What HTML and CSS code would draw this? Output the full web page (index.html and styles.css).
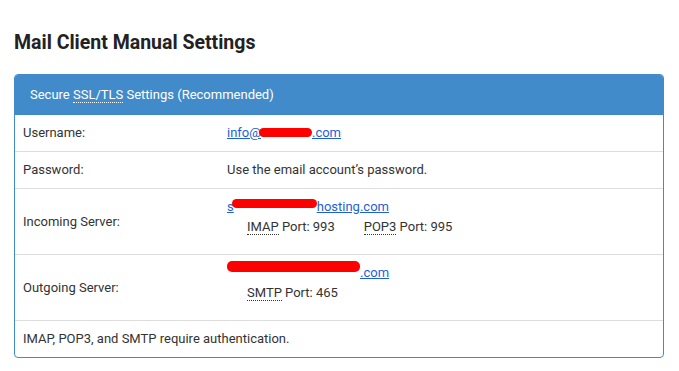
FILE: index.html
```html
<!DOCTYPE html>
<html>
<head>
<meta charset="utf-8">
<link rel="stylesheet" href="styles.css">
</head>
<body>
<div class="page">
  <h2 class="title">Mail Client Manual Settings</h2>
  <div class="panel">
    <div class="panel-heading">Secure <abbr>SSL/TLS</abbr> Settings (Recommended)</div>
    <table class="settings">
      <tr>
        <td class="label">Username:</td>
        <td><a href="#">info@<span class="redact r-user"></span>.com</a></td>
      </tr>
      <tr>
        <td class="label">Password:</td>
        <td>Use the email account’s password.</td>
      </tr>
      <tr>
        <td class="label">Incoming Server:</td>
        <td>
          <a href="#">s<span class="redact r-in"></span>hosting.com</a>
          <div class="ports"><span class="port"><abbr>IMAP</abbr> Port: 993</span><span class="port port2"><abbr>POP3</abbr> Port: 995</span></div>
        </td>
      </tr>
      <tr>
        <td class="label">Outgoing Server:</td>
        <td>
          <a href="#"><span class="redact r-out"></span>.com</a>
          <div class="ports"><span class="port"><abbr>SMTP</abbr> Port: 465</span></div>
        </td>
      </tr>
      <tr>
        <td colspan="2">IMAP, POP3, and SMTP require authentication.</td>
      </tr>
    </table>
  </div>
</div>
</body>
</html>
```
FILE: styles.css
```css
html, body {
  margin: 0;
  padding: 0;
  background: #fff;
}
body {
  font-family: Roboto, "Liberation Sans", sans-serif;
  font-size: 13px;
  line-height: 1.42857;
  color: #333;
}
.page {
  padding: 32px 15px 0 14px;
}
.title {
  margin: 0 0 20px 0;
  font-size: 19.5px;
  line-height: 22px;
  font-weight: 700;
  color: #222;
}
.panel {
  border: 1px solid #428bca;
  border-radius: 4px;
  overflow: hidden;
  background: #fff;
}
.panel-heading {
  background: #428bca;
  color: #fff;
  padding: 10px 15px;
  line-height: 19px;
  border-bottom: 1px solid #3f87c6;
}
abbr {
  text-decoration: none;
  border-bottom: 1px dotted currentColor;
  cursor: help;
}
.settings {
  width: 100%;
  border-collapse: collapse;
}
.settings td {
  padding: 8px;
  line-height: 20px;
  border-top: 1px solid #ddd;
  vertical-align: middle;
}
.settings tr:first-child td {
  border-top: 0;
}
.settings td.label {
  width: 188px;
}
a {
  color: #1f5fd6;
  text-decoration: underline;
}
.ports {
  margin-bottom: 9px;
  padding-left: 20px;
}
.port2 {
  margin-left: 29px;
}
.redact {
  display: inline-block;
  background: #f00;
  height: 9px;
  border-radius: 5px;
  vertical-align: baseline;
  position: relative;
}
.r-user {
  width: 53px;
  margin-left: -2px;
}
.r-in {
  width: 85px;
  top: -3px;
  margin-left: -2px;
}
.r-out {
  width: 133px;
  height: 11px;
  top: -5px;
}
```
